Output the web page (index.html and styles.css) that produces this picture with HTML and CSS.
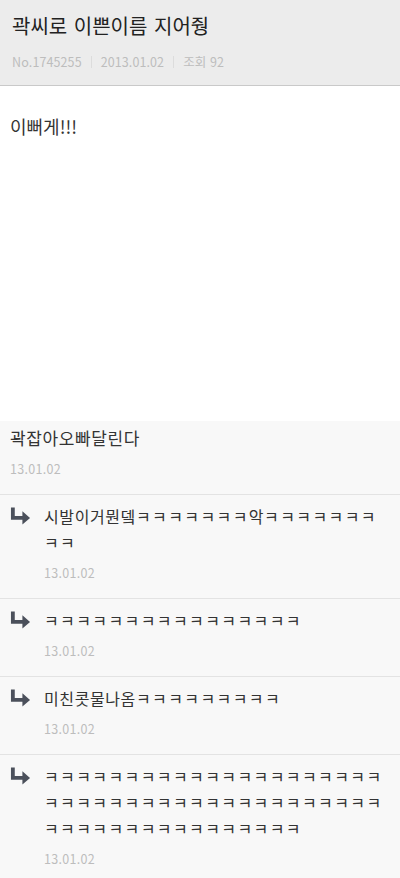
FILE: index.html
```html
<!DOCTYPE html>
<html lang="ko">
<head>
    <meta charset="UTF-8">
    <meta name="viewport" content="width=device-width, initial-scale=1.0">
    <title>곽씨로 이쁜이름 지어줭</title>
    <link rel="stylesheet" href="styles.css">
</head>
<body>
    <header class="post-header">
        <h1 class="post-title">곽씨로 이쁜이름 지어줭</h1>
        <div class="post-meta">
            <span>No.1745255</span>
            <span class="sep"></span>
            <span>2013.01.02</span>
            <span class="sep"></span>
            <span>조회 92</span>
        </div>
    </header>

    <main class="post-body">
        <p>이뻐게!!!</p>
    </main>

    <section class="comments">
        <div class="comment comment-first">
            <p class="comment-text">곽잡아오빠달린다</p>
            <div class="comment-date">13.01.02</div>
        </div>

        <div class="comment reply">
            <svg class="reply-icon" viewBox="0 0 22 18" aria-hidden="true">
                <path d="M1 0 H5 V9 H13 V4 L21 11 L13 18 V13 H1 Z"/>
            </svg>
            <div class="reply-content">
                <p class="comment-text">시발이거뭔뎈<span class="laugh">ㅋㅋㅋㅋㅋㅋㅋ</span>악<span class="laugh">ㅋㅋㅋㅋㅋㅋㅋㅋㅋ</span></p>
                <div class="comment-date">13.01.02</div>
            </div>
        </div>

        <div class="comment reply">
            <svg class="reply-icon" viewBox="0 0 22 18" aria-hidden="true">
                <path d="M1 0 H5 V9 H13 V4 L21 11 L13 18 V13 H1 Z"/>
            </svg>
            <div class="reply-content">
                <p class="comment-text"><span class="laugh">ㅋㅋㅋㅋㅋㅋㅋㅋㅋㅋㅋㅋㅋㅋㅋㅋ</span></p>
                <div class="comment-date">13.01.02</div>
            </div>
        </div>

        <div class="comment reply">
            <svg class="reply-icon" viewBox="0 0 22 18" aria-hidden="true">
                <path d="M1 0 H5 V9 H13 V4 L21 11 L13 18 V13 H1 Z"/>
            </svg>
            <div class="reply-content">
                <p class="comment-text">미친콧물나옴<span class="laugh">ㅋㅋㅋㅋㅋㅋㅋㅋㅋ</span></p>
                <div class="comment-date">13.01.02</div>
            </div>
        </div>

        <div class="comment reply">
            <svg class="reply-icon" viewBox="0 0 22 18" aria-hidden="true">
                <path d="M1 0 H5 V9 H13 V4 L21 11 L13 18 V13 H1 Z"/>
            </svg>
            <div class="reply-content">
                <p class="comment-text"><span class="laugh">ㅋㅋㅋㅋㅋㅋㅋㅋㅋㅋㅋㅋㅋㅋㅋㅋㅋㅋㅋㅋㅋㅋㅋㅋㅋㅋㅋㅋㅋㅋㅋㅋㅋㅋㅋㅋㅋㅋㅋㅋㅋㅋㅋㅋㅋㅋㅋㅋㅋㅋㅋㅋㅋㅋㅋㅋㅋㅋ</span></p>
                <div class="comment-date">13.01.02</div>
            </div>
        </div>
    </section>
</body>
</html>
```

FILE: styles.css
```css
:root {
    --text: #2b2b2b;
    --muted: #bdbdbd;
    --line: #e3e3e3;
    --icon: #4b505b;
}

* {
    margin: 0;
    padding: 0;
    box-sizing: border-box;
    font-family: "Noto Sans CJK KR", "Noto Sans", sans-serif;
}

body {
    background-color: #f8f8f8;
    color: var(--text);
}

.post-header {
    background-color: #ececec;
    border-bottom: 1px solid #c9c9c9;
    padding: 12px 12px 14px;
    height: 86px;
}

.post-title {
    font-size: 20px;
    font-weight: 400;
    line-height: 28px;
    color: #222;
    word-spacing: 1px;
}

.post-meta {
    display: flex;
    align-items: center;
    margin-top: 13px;
    font-size: 12.5px;
    line-height: 18px;
    color: var(--muted);
    letter-spacing: 0.1px;
}

.sep {
    width: 1px;
    height: 12px;
    background-color: #dcdcdc;
    margin: 0 9px;
}

.post-body {
    background-color: #fff;
    min-height: 335px;
    padding: 27px 10px;
    font-size: 18px;
    line-height: 26px;
    color: #333;
}

.comment {
    padding: 8px 12px 16px 10px;
    border-bottom: 1px solid var(--line);
}

.comment-first {
    padding-top: 4px;
}

.comment-text {
    font-size: 16px;
    line-height: 26px;
    color: #333;
    word-break: break-all;
    letter-spacing: 0.6px;
}

.laugh {
    letter-spacing: 1.4px;
}

.comment-first .comment-text {
    font-size: 17px;
}

.comment-date {
    margin-top: 9px;
    font-size: 12.5px;
    line-height: 18px;
    color: var(--muted);
    letter-spacing: 0.3px;
}

.reply {
    display: flex;
    align-items: flex-start;
}

.reply-icon {
    flex: none;
    width: 21px;
    height: 18px;
    margin-top: 4px;
    margin-right: 13px;
    fill: var(--icon);
}

.reply-content {
    flex: 1;
    min-width: 0;
}
```
